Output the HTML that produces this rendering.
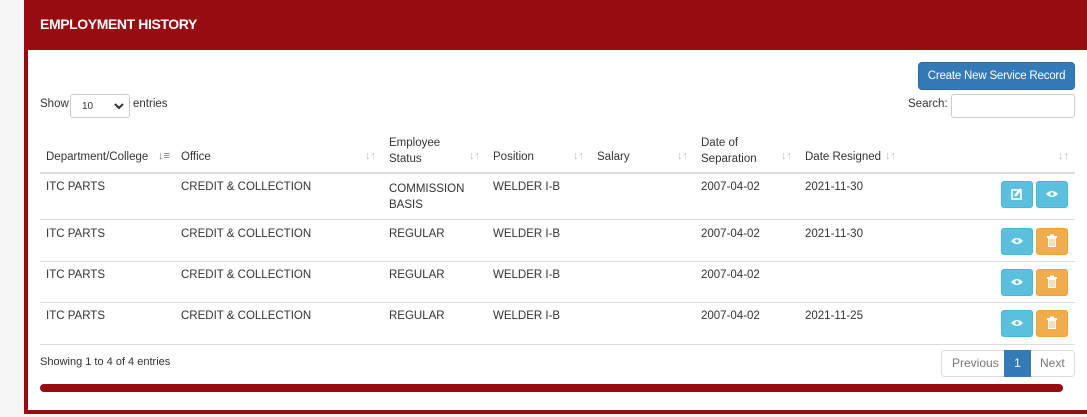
<!DOCTYPE html>
<html><head><meta charset="utf-8"><style>
*{margin:0;padding:0;box-sizing:border-box}
body{width:1087px;height:417px;background:#f7f7f7;font-family:"Liberation Sans",sans-serif;font-size:11.5px;color:#333;position:relative;overflow:hidden}
.a{position:absolute;white-space:nowrap}
.panel{position:absolute;left:24px;top:0;width:1080px;height:414px;background:#fff;border:4px solid #970c10;border-top:0;border-right:0}
.hdr{position:absolute;left:24px;top:0;width:1063px;height:50px;background:#970c10}
.hdr span{position:absolute;left:16px;top:16px;color:#fff;font-weight:bold;font-size:14px;letter-spacing:-0.4px}
.btn{position:absolute;width:32px;height:27px;border-radius:3px}
.info{background:#5bc0de;border:1px solid #46b8da}
.warn{background:#f0ad4e;border:1px solid #eea236}
.line{position:absolute;left:40px;width:1035px;height:1px;background:#ddd}
.s{position:absolute;color:#bbb;font-size:11px}
</style></head><body>
<div class="panel"></div>
<div class="hdr"><span>EMPLOYMENT HISTORY</span></div>
<div class="a" style="left:918px;top:62px;width:157px;height:28px;background:#337ab7;border:1px solid #2e6da4;border-radius:4px;color:#fff;font-size:11.5px;letter-spacing:-0.2px;text-align:center;line-height:26px">Create New Service Record</div>
<div class="a" style="left:40px;top:98px">Show</div>
<div class="a" style="left:70px;top:94px;width:60px;height:24px;border:1px solid #ccc;border-radius:3px;font-size:10px;padding:6px 0 0 11px">10<svg style="position:absolute;right:5px;top:8px" width="10" height="7"><path d="M1 1L5 5L9 1" stroke="#333" stroke-width="2" fill="none"/></svg></div>
<div class="a" style="left:133px;top:98px">entries</div>
<div class="a" style="left:908px;top:98px">Search:</div>
<div class="a" style="left:951px;top:94px;width:124px;height:24px;border:1px solid #ccc;border-radius:3px"></div>
<div class="a" style="left:46px;top:151px">Department/College</div>
<div class="a" style="left:181px;top:151px">Office</div>
<div class="a" style="left:389px;top:135px;line-height:16px">Employee<br>Status</div>
<div class="a" style="left:493px;top:151px">Position</div>
<div class="a" style="left:597px;top:151px">Salary</div>
<div class="a" style="left:701px;top:135px;line-height:16px">Date of<br>Separation</div>
<div class="a" style="left:805px;top:151px">Date Resigned</div>
<div class="s" style="left:158px;top:150px;color:#777">↓≡</div>
<div class="s" style="left:365px;top:150px">↓↑</div>
<div class="s" style="left:469px;top:150px">↓↑</div>
<div class="s" style="left:573px;top:150px">↓↑</div>
<div class="s" style="left:677px;top:150px">↓↑</div>
<div class="s" style="left:781px;top:150px">↓↑</div>
<div class="s" style="left:885px;top:150px">↓↑</div>
<div class="s" style="left:1058px;top:150px">↓↑</div>
<div class="line" style="top:172px;height:2px"></div>
<div class="line" style="top:219px"></div>
<div class="line" style="top:261px"></div>
<div class="line" style="top:302px"></div>
<div class="line" style="top:344px"></div>
<div class="a" style="left:46px;top:181px">ITC PARTS</div><div class="a" style="left:181px;top:181px">CREDIT &amp; COLLECTION</div><div class="a" style="left:389px;top:181px;line-height:16px">COMMISSION<br>BASIS</div><div class="a" style="left:493px;top:181px">WELDER I-B</div><div class="a" style="left:701px;top:181px">2007-04-02</div><div class="a" style="left:805px;top:181px">2021-11-30</div>
<div class="a" style="left:46px;top:228px">ITC PARTS</div><div class="a" style="left:181px;top:228px">CREDIT &amp; COLLECTION</div><div class="a" style="left:389px;top:228px">REGULAR</div><div class="a" style="left:493px;top:228px">WELDER I-B</div><div class="a" style="left:701px;top:228px">2007-04-02</div><div class="a" style="left:805px;top:228px">2021-11-30</div>
<div class="a" style="left:46px;top:269px">ITC PARTS</div><div class="a" style="left:181px;top:269px">CREDIT &amp; COLLECTION</div><div class="a" style="left:389px;top:269px">REGULAR</div><div class="a" style="left:493px;top:269px">WELDER I-B</div><div class="a" style="left:701px;top:269px">2007-04-02</div>
<div class="a" style="left:46px;top:310px">ITC PARTS</div><div class="a" style="left:181px;top:310px">CREDIT &amp; COLLECTION</div><div class="a" style="left:389px;top:310px">REGULAR</div><div class="a" style="left:493px;top:310px">WELDER I-B</div><div class="a" style="left:701px;top:310px">2007-04-02</div><div class="a" style="left:805px;top:310px">2021-11-25</div>
<svg width="0" height="0" style="position:absolute"><defs>
<g id="eye"><path d="M-6 0Q0-6 6 0Q0 6-6 0Z" fill="#fff"/><circle r="1.8" fill="#5bc0de"/></g>
<g id="trash"><rect x="-5" y="-5" width="10" height="2" fill="#fff"/><rect x="-2" y="-6.5" width="4" height="2" fill="#fff"/><rect x="-4" y="-3" width="8" height="9" fill="#fff"/><path d="M-2-2V5M0-2V5M2-2V5" stroke="#f0ad4e" stroke-width="0.8"/></g>
<g id="edit"><rect x="-5" y="-4" width="9" height="9" fill="none" stroke="#fff" stroke-width="1.6"/><path d="M-2 2L4-5" stroke="#fff" stroke-width="2.5"/></g>
</defs></svg>
<div class="btn info" style="left:1001px;top:181px"><svg width="30" height="25"><use href="#edit" x="15" y="12"/></svg></div>
<div class="btn info" style="left:1036px;top:181px"><svg width="30" height="25"><use href="#eye" x="15" y="12"/></svg></div>
<div class="btn info" style="left:1001px;top:228px"><svg width="30" height="25"><use href="#eye" x="15" y="12"/></svg></div>
<div class="btn warn" style="left:1036px;top:228px"><svg width="30" height="25"><use href="#trash" x="15" y="12"/></svg></div>
<div class="btn info" style="left:1001px;top:269px"><svg width="30" height="25"><use href="#eye" x="15" y="12"/></svg></div>
<div class="btn warn" style="left:1036px;top:269px"><svg width="30" height="25"><use href="#trash" x="15" y="12"/></svg></div>
<div class="btn info" style="left:1001px;top:310px"><svg width="30" height="25"><use href="#eye" x="15" y="12"/></svg></div>
<div class="btn warn" style="left:1036px;top:310px"><svg width="30" height="25"><use href="#trash" x="15" y="12"/></svg></div>
<div class="a" style="left:40px;top:356px;font-size:11px">Showing 1 to 4 of 4 entries</div>
<div class="a" style="left:941px;top:350px;width:134px;height:27px;border:1px solid #ddd;border-radius:4px;font-size:12px;color:#777;line-height:25px">
<span style="position:absolute;left:10px">Previous</span>
<span style="position:absolute;left:62px;top:-1px;width:27px;height:27px;background:#337ab7;color:#fff;text-align:center;line-height:27px">1</span>
<span style="position:absolute;left:98px">Next</span></div>
<div class="a" style="left:40px;top:384px;width:1023px;height:8px;background:#970c10;border-radius:4px"></div>
</body></html>
